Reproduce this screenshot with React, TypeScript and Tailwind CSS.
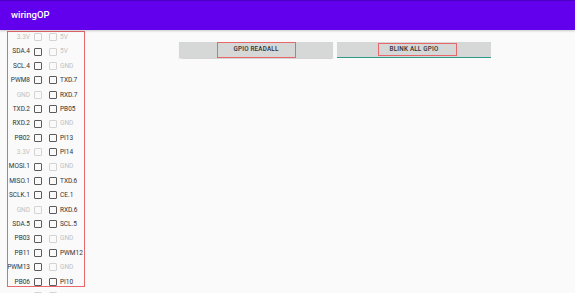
import React from "react";

type Pin = [string, boolean, string, boolean];

const pins: Pin[] = [
  ["3.3V", false, "5V", false],
  ["SDA.4", true, "5V", false],
  ["SCL.4", true, "GND", false],
  ["PWM8", true, "TXD.7", true],
  ["GND", false, "RXD.7", true],
  ["TXD.2", true, "PB05", true],
  ["RXD.2", true, "GND", false],
  ["PB02", true, "PI13", true],
  ["3.3V", false, "PI14", true],
  ["MOSI.1", true, "GND", false],
  ["MISO.1", true, "TXD.6", true],
  ["SCLK.1", true, "CE.1", true],
  ["GND", false, "RXD.6", true],
  ["SDA.5", true, "SCL.5", true],
  ["PB03", true, "GND", false],
  ["PB11", true, "PWM12", true],
  ["PWM13", true, "GND", false],
  ["PB06", true, "PI10", true],
  ["", false, "", false],
];

function Box({ on }: { on: boolean }) {
  return (
    <div
      className={
        on
          ? "w-[8px] h-[8px] border-[1.5px] border-[#5b5b5b] rounded-[1px] shrink-0"
          : "w-[8px] h-[8px] border-[1.5px] border-[#d4d4d4] rounded-[1px] shrink-0"
      }
    />
  );
}

export default function App() {
  return (
    <div
      className="relative w-[575px] h-[293px] overflow-hidden bg-[#fafafa]"
      style={{ fontFamily: "Roboto, 'Liberation Sans', sans-serif" }}
    >
      <div className="h-[30px] bg-[#6200ee] border-t border-[#4b00c4] flex items-center pl-[11px] shadow-[0_1px_2px_rgba(0,0,0,0.2)] relative z-10">
        <span className="text-white text-[9.5px] font-medium">wiringOP</span>
      </div>
      <div className="flex">
        <div className="flex flex-col w-[100px]">
          {pins.map((p, i) => (
            <div key={i} className="h-[14.4px] flex items-center text-[6.5px] leading-none">
              <div
                className={
                  p[1]
                    ? "w-[30px] text-right text-[#333333] whitespace-nowrap"
                    : "w-[30px] text-right text-[#c2c2c2] whitespace-nowrap"
                }
              >
                {p[0]}
              </div>
              <div className="ml-[3.5px]">
                <Box on={p[1]} />
              </div>
              <div className="ml-[7px]">
                <Box on={p[3]} />
              </div>
              <div
                className={
                  p[3]
                    ? "ml-[3.5px] text-[#333333] whitespace-nowrap"
                    : "ml-[3.5px] text-[#c2c2c2] whitespace-nowrap"
                }
              >
                {p[2]}
              </div>
            </div>
          ))}
        </div>
        <div className="flex gap-[4px] ml-[79px] mt-[12px] h-[15.5px]">
          <div className="relative w-[154px] h-[15.5px] bg-[#d6d7d7] flex items-center justify-center text-[6.3px] font-medium text-[#333333] tracking-[0.2px] shadow-[0_0.5px_1px_rgba(0,0,0,0.15)]">
            GPIO READALL
            <div className="absolute left-[38px] top-0 w-[79px] h-[16px] border-[1.5px] border-[#e8676a]" />
          </div>
          <div className="relative w-[154px] h-[15.5px] bg-[#d6d7d7] flex items-center justify-center text-[6.3px] font-medium text-[#333333] tracking-[0.2px] border-b-[1.5px] border-[#2f9c8b]">
            BLINK ALL GPIO
            <div className="absolute left-[41px] top-[0.5px] w-[79px] h-[13.5px] border-[1.5px] border-[#e8676a]" />
          </div>
        </div>
      </div>
      <div className="absolute left-[7px] top-[31px] w-[78px] h-[256px] border-[1.5px] border-[#e8676a] pointer-events-none" />
    </div>
  );
}
